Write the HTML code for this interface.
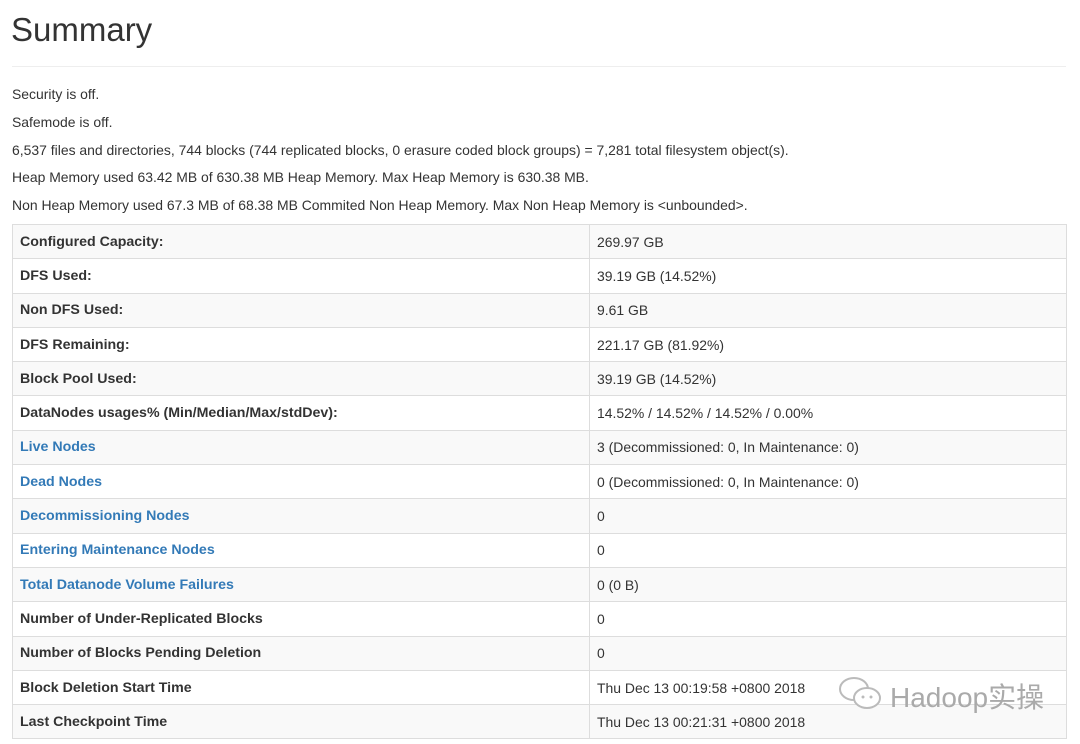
<!DOCTYPE html>
<html><head><meta charset="utf-8"><style>
body{margin:0;background:#fff;font-family:"Liberation Sans",sans-serif;color:#333;font-size:13.95px;}
h1{position:absolute;left:11px;top:10px;margin:0;font-weight:normal;font-size:33px;line-height:40px;}
.hr{position:absolute;left:12px;top:66px;width:1054px;height:1px;background:#eee;}
.p{position:absolute;left:12px;line-height:18px;}
table{position:absolute;left:12px;top:224px;width:1055px;border-collapse:collapse;}
td{border:1px solid #ddd;height:34.3px;padding:0 7px;box-sizing:border-box;vertical-align:middle;line-height:18px;}
tr:nth-child(odd){background:#f9f9f9;}
td:first-child{width:577px;font-weight:bold;font-size:14.2px;}
a{color:#337ab7;text-decoration:none;}
.wm{position:absolute;top:676px;color:#aaa;font-size:28px;font-family:"Liberation Sans","Noto Sans CJK SC",sans-serif;}
</style></head><body>
<h1>Summary</h1><div class="hr"></div>
<div class="p" style="top:85px">Security is off.</div>
<div class="p" style="top:113px">Safemode is off.</div>
<div class="p" style="top:141px">6,537 files and directories, 744 blocks (744 replicated blocks, 0 erasure coded block groups) = 7,281 total filesystem object(s).</div>
<div class="p" style="top:168px">Heap Memory used 63.42 MB of 630.38 MB Heap Memory. Max Heap Memory is 630.38 MB.</div>
<div class="p" style="top:196px">Non Heap Memory used 67.3 MB of 68.38 MB Commited Non Heap Memory. Max Non Heap Memory is &lt;unbounded&gt;.</div>
<table>
<tr><td>Configured Capacity:</td><td>269.97 GB</td></tr>
<tr><td>DFS Used:</td><td>39.19 GB (14.52%)</td></tr>
<tr><td>Non DFS Used:</td><td>9.61 GB</td></tr>
<tr><td>DFS Remaining:</td><td>221.17 GB (81.92%)</td></tr>
<tr><td>Block Pool Used:</td><td>39.19 GB (14.52%)</td></tr>
<tr><td>DataNodes usages% (Min/Median/Max/stdDev):</td><td>14.52% / 14.52% / 14.52% / 0.00%</td></tr>
<tr><td><a>Live Nodes</a></td><td>3 (Decommissioned: 0, In Maintenance: 0)</td></tr>
<tr><td><a>Dead Nodes</a></td><td>0 (Decommissioned: 0, In Maintenance: 0)</td></tr>
<tr><td><a>Decommissioning Nodes</a></td><td>0</td></tr>
<tr><td><a>Entering Maintenance Nodes</a></td><td>0</td></tr>
<tr><td><a>Total Datanode Volume Failures</a></td><td>0 (0 B)</td></tr>
<tr><td>Number of Under-Replicated Blocks</td><td>0</td></tr>
<tr><td>Number of Blocks Pending Deletion</td><td>0</td></tr>
<tr><td>Block Deletion Start Time</td><td>Thu Dec 13 00:19:58 +0800 2018</td></tr>
<tr><td>Last Checkpoint Time</td><td>Thu Dec 13 00:21:31 +0800 2018</td></tr>
</table>
<svg style="position:absolute;left:837px;top:674px" width="50" height="40" viewBox="0 0 50 40"><ellipse cx="17" cy="15" rx="14" ry="11" fill="none" stroke="#bbb" stroke-width="2"/><ellipse cx="30" cy="24" rx="13" ry="10" fill="#fff" stroke="#bbb" stroke-width="2"/><circle cx="26" cy="23" r="1.5" fill="#bbb"/><circle cx="34" cy="23" r="1.5" fill="#bbb"/></svg>
<div class="wm" style="left:890px">Hadoop实操</div>
</body></html>
